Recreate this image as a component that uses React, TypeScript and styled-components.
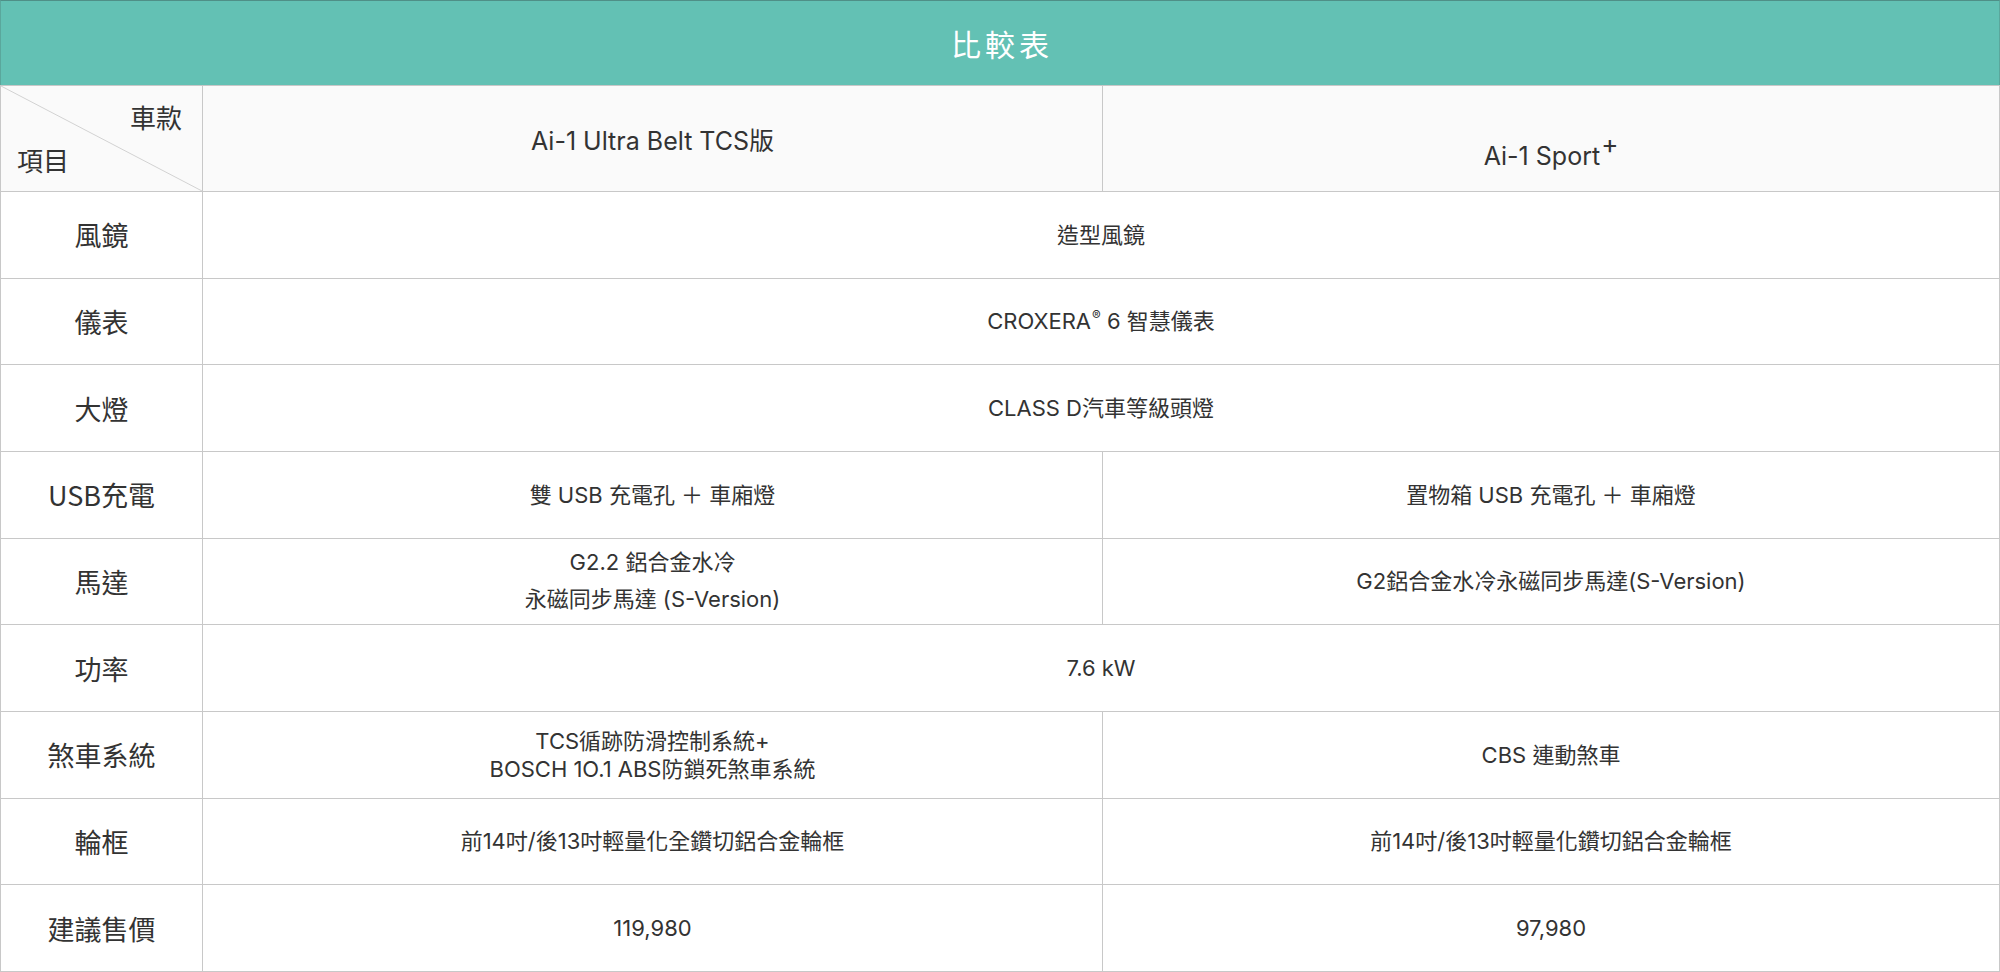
import React from 'react';
import styled, { createGlobalStyle } from 'styled-components';

const GlobalStyle = createGlobalStyle`
  html, body {
    margin: 0;
    padding: 0;
    background: #fff;
  }
  * {
    box-sizing: border-box;
  }
`;

const Page = styled.div`
  width: 2000px;
  height: 972px;
  font-family: Inter, Roboto, 'Noto Sans CJK TC', sans-serif;
  color: #333;
  display: flex;
  flex-direction: column;
`;

const TitleBar = styled.div`
  height: 85px;
  flex-shrink: 0;
  background: #63c1b4;
  border-top: 1px solid #4f8f87;
  border-left: 1px solid #5aa79c;
  border-right: 1px solid #5aa79c;
  display: flex;
  align-items: center;
  justify-content: center;
  color: #fff;
  font-size: 30px;
  letter-spacing: 4px;
  padding-left: 4px;
  font-family: 'Noto Sans CJK TC', sans-serif;
`;

const Grid = styled.div`
  flex: 1;
  display: grid;
  grid-template-columns: 202px 900px 1fr;
  grid-template-rows: 107px repeat(9, 1fr);
  border-left: 1px solid #c8c8c8;
`;

const BaseCell = styled.div`
  border-right: 1px solid #c8c8c8;
  border-bottom: 1px solid #c8c8c8;
  display: flex;
  flex-direction: column;
  align-items: center;
  justify-content: center;
  text-align: center;
`;

const Corner = styled(BaseCell)`
  position: relative;
  background: #fafafa;
  border-top: 1px solid #c8c8c8;
  align-items: stretch;
  justify-content: space-between;
  padding: 14px 20px 14px 16px;
  font-size: 26px;
  font-family: 'Noto Sans CJK TC', sans-serif;
  line-height: 1.3;
`;

const Diagonal = styled.svg`
  position: absolute;
  inset: 0;
  width: 100%;
  height: 100%;
`;

const CornerTop = styled.span`
  align-self: flex-end;
  position: relative;
`;

const CornerBottom = styled.span`
  align-self: flex-start;
  position: relative;
`;

const ModelCell = styled(BaseCell)<{ $lower?: boolean }>`
  background: #fafafa;
  border-top: 1px solid #c8c8c8;
  font-size: 25px;
  padding-top: ${props => (props.$lower ? '34px' : '0')};
`;

const Plus = styled.sup`
  font-size: 26px;
  line-height: 0;
  position: relative;
  top: -2px;
  margin-left: 1px;
`;

const Reg = styled.sup`
  font-size: 13px;
  line-height: 0;
  position: relative;
  top: -1px;
  margin-left: 1px;
`;

const Label = styled(BaseCell)`
  font-size: 27px;
  font-family: 'Noto Sans CJK TC', sans-serif;
`;

const Cell = styled(BaseCell)<{ $span?: number; $gap?: 'loose' | 'tight' }>`
  grid-column: span ${props => props.$span || 1};
  font-size: 22px;
  line-height: ${props => (props.$gap === 'loose' ? '37px' : '28px')};
`;

const Line = styled.div``;

type Lines = React.ReactNode | string[];

interface SpecRow {
  label: string;
  shared?: Lines;
  a?: Lines;
  b?: Lines;
  gap?: 'loose' | 'tight';
}

const rows: SpecRow[] = [
  { label: '風鏡', shared: '造型風鏡' },
  {
    label: '儀表',
    shared: (
      <span>
        CROXERA<Reg>®</Reg> 6 智慧儀表
      </span>
    )
  },
  { label: '大燈', shared: 'CLASS D汽車等級頭燈' },
  { label: 'USB充電', a: '雙 USB 充電孔 ＋ 車廂燈', b: '置物箱 USB 充電孔 ＋ 車廂燈' },
  {
    label: '馬達',
    a: ['G2.2 鋁合金水冷', '永磁同步馬達 (S-Version)'],
    b: 'G2鋁合金水冷永磁同步馬達(S-Version)',
    gap: 'loose'
  },
  { label: '功率', shared: '7.6 kW' },
  {
    label: '煞車系統',
    a: ['TCS循跡防滑控制系統+', 'BOSCH 1O.1 ABS防鎖死煞車系統'],
    b: 'CBS 連動煞車',
    gap: 'tight'
  },
  { label: '輪框', a: '前14吋/後13吋輕量化全鑽切鋁合金輪框', b: '前14吋/後13吋輕量化鑽切鋁合金輪框' },
  { label: '建議售價', a: '119,980', b: '97,980' }
];

const renderLines = (value: Lines) =>
  Array.isArray(value) ? value.map((line, i) => <Line key={i}>{line}</Line>) : value;

const App = () => (
  <>
    <GlobalStyle />
    <Page>
      <TitleBar>比較表</TitleBar>
      <Grid>
        <Corner>
          <Diagonal viewBox="0 0 100 100" preserveAspectRatio="none">
            <line x1="0" y1="0" x2="100" y2="100" stroke="#d2d2d2" strokeWidth="1" vectorEffect="non-scaling-stroke" />
          </Diagonal>
          <CornerTop>車款</CornerTop>
          <CornerBottom>項目</CornerBottom>
        </Corner>
        <ModelCell>Ai-1 Ultra Belt TCS版</ModelCell>
        <ModelCell $lower>
          <span>
            Ai-1 Sport<Plus>+</Plus>
          </span>
        </ModelCell>

        {rows.map(row => (
          <React.Fragment key={row.label}>
            <Label>{row.label}</Label>
            {row.shared !== undefined ? (
              <Cell $span={2}>{renderLines(row.shared)}</Cell>
            ) : (
              <>
                <Cell $gap={row.gap}>{renderLines(row.a)}</Cell>
                <Cell $gap={row.gap}>{renderLines(row.b)}</Cell>
              </>
            )}
          </React.Fragment>
        ))}
      </Grid>
    </Page>
  </>
);

export default App;
